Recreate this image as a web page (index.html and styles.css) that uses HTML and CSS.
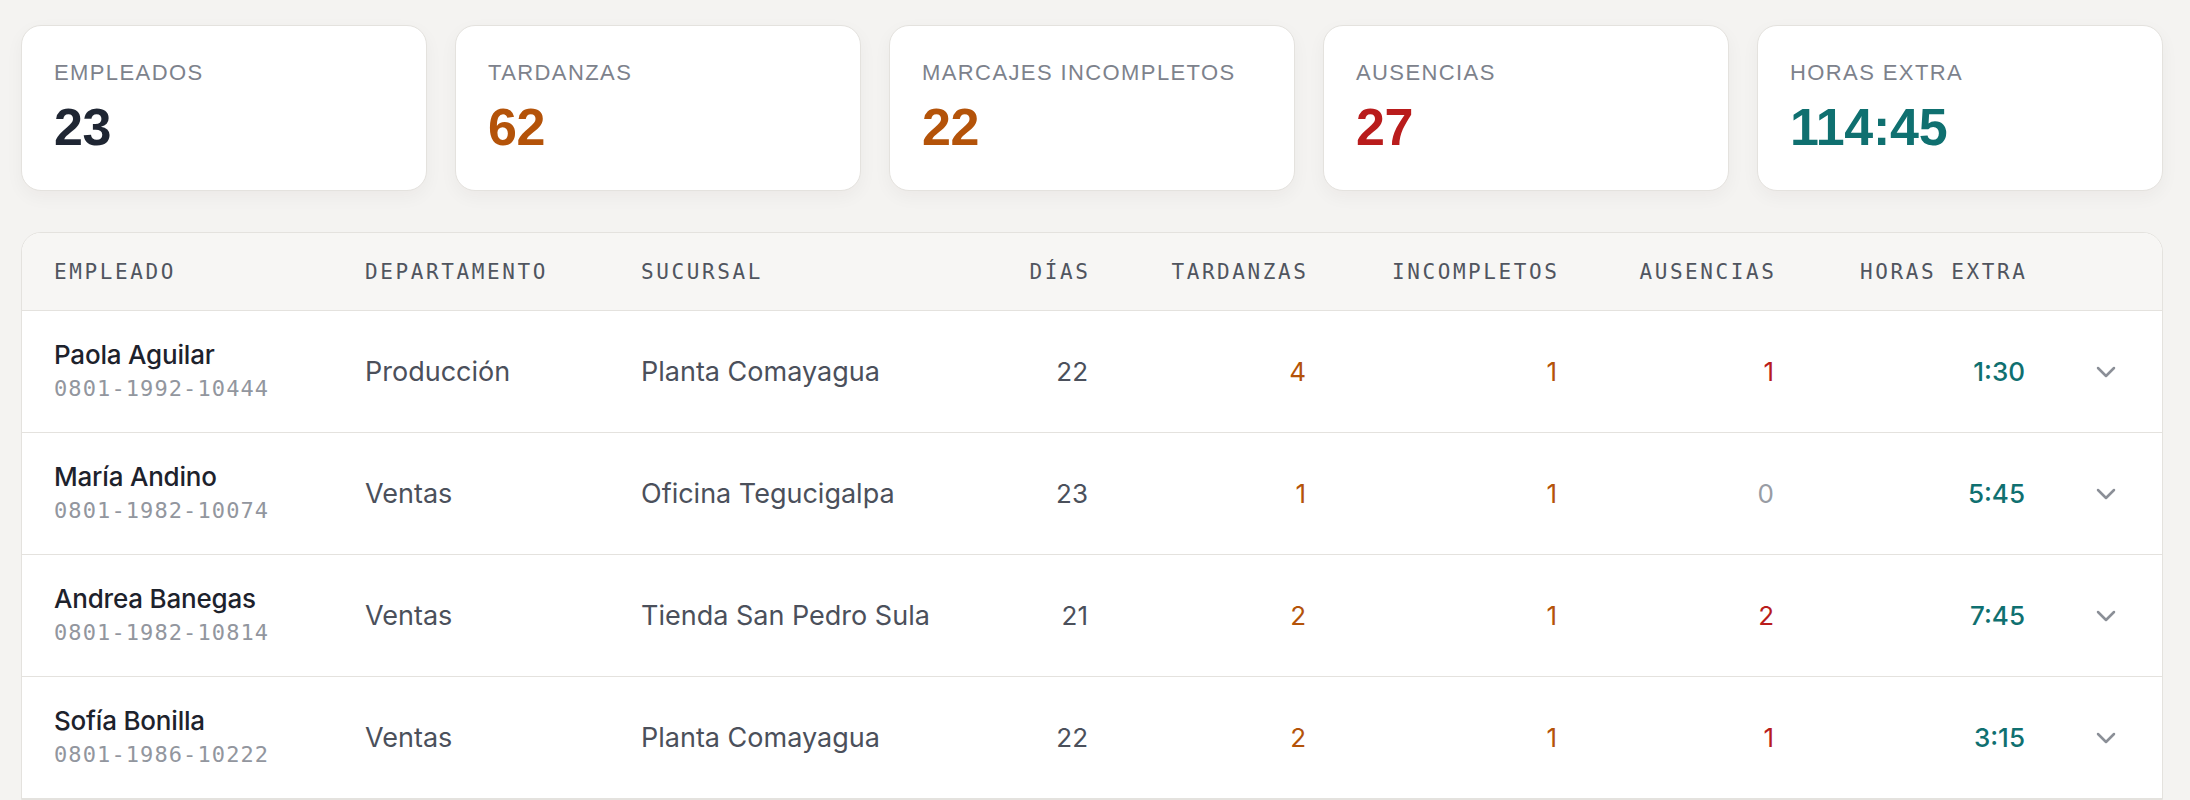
FILE: index.html
```html
<!DOCTYPE html>
<html lang="es">
<head>
<meta charset="utf-8">
<title>Resumen de asistencia</title>
<link rel="stylesheet" href="styles.css">
</head>
<body>
<main class="page">
  <section class="stats">
    <div class="card"><div class="card-label">EMPLEADOS</div><div class="card-value v-dark">23</div></div>
    <div class="card"><div class="card-label">TARDANZAS</div><div class="card-value v-orange">62</div></div>
    <div class="card"><div class="card-label">MARCAJES INCOMPLETOS</div><div class="card-value v-orange">22</div></div>
    <div class="card"><div class="card-label">AUSENCIAS</div><div class="card-value v-red">27</div></div>
    <div class="card"><div class="card-label">HORAS EXTRA</div><div class="card-value v-teal">114:45</div></div>
  </section>

  <section class="table">
    <div class="row head">
      <div class="c">EMPLEADO</div>
      <div class="c">DEPARTAMENTO</div>
      <div class="c">SUCURSAL</div>
      <div class="c r">DÍAS</div>
      <div class="c r">TARDANZAS</div>
      <div class="c r">INCOMPLETOS</div>
      <div class="c r">AUSENCIAS</div>
      <div class="c r">HORAS EXTRA</div>
      <div class="c"></div>
    </div>

    <div class="row body">
      <div class="c emp"><div class="name">Paola Aguilar</div><div class="id">0801-1992-10444</div></div>
      <div class="c txt">Producción</div>
      <div class="c txt">Planta Comayagua</div>
      <div class="c r num">22</div>
      <div class="c r num orange">4</div>
      <div class="c r num orange">1</div>
      <div class="c r num red">1</div>
      <div class="c r num teal">1:30</div>
      <div class="c chev"><svg width="20" height="12" viewBox="0 0 20 12"><polyline points="2,2 10,10 18,2" fill="none" stroke="#8b8f97" stroke-width="2.5" stroke-linecap="round" stroke-linejoin="round"/></svg></div>
    </div>

    <div class="row body">
      <div class="c emp"><div class="name">María Andino</div><div class="id">0801-1982-10074</div></div>
      <div class="c txt">Ventas</div>
      <div class="c txt">Oficina Tegucigalpa</div>
      <div class="c r num">23</div>
      <div class="c r num orange">1</div>
      <div class="c r num orange">1</div>
      <div class="c r num zero">0</div>
      <div class="c r num teal">5:45</div>
      <div class="c chev"><svg width="20" height="12" viewBox="0 0 20 12"><polyline points="2,2 10,10 18,2" fill="none" stroke="#8b8f97" stroke-width="2.5" stroke-linecap="round" stroke-linejoin="round"/></svg></div>
    </div>

    <div class="row body">
      <div class="c emp"><div class="name">Andrea Banegas</div><div class="id">0801-1982-10814</div></div>
      <div class="c txt">Ventas</div>
      <div class="c txt">Tienda San Pedro Sula</div>
      <div class="c r num">21</div>
      <div class="c r num orange">2</div>
      <div class="c r num orange">1</div>
      <div class="c r num red">2</div>
      <div class="c r num teal">7:45</div>
      <div class="c chev"><svg width="20" height="12" viewBox="0 0 20 12"><polyline points="2,2 10,10 18,2" fill="none" stroke="#8b8f97" stroke-width="2.5" stroke-linecap="round" stroke-linejoin="round"/></svg></div>
    </div>

    <div class="row body">
      <div class="c emp"><div class="name">Sofía Bonilla</div><div class="id">0801-1986-10222</div></div>
      <div class="c txt">Ventas</div>
      <div class="c txt">Planta Comayagua</div>
      <div class="c r num">22</div>
      <div class="c r num orange">2</div>
      <div class="c r num orange">1</div>
      <div class="c r num red">1</div>
      <div class="c r num teal">3:15</div>
      <div class="c chev"><svg width="20" height="12" viewBox="0 0 20 12"><polyline points="2,2 10,10 18,2" fill="none" stroke="#8b8f97" stroke-width="2.5" stroke-linecap="round" stroke-linejoin="round"/></svg></div>
    </div>
  </section>
</main>
</body>
</html>
```
FILE: styles.css
```css
* { box-sizing: border-box; }
html, body { margin: 0; padding: 0; }
body {
  background: #f4f3f1;
  font-family: "Inter", "Liberation Sans", sans-serif;
  color: #1f2430;
  overflow: hidden;
}
.page {
  padding: 25px 27px 0 21px;
}
.stats {
  display: grid;
  grid-template-columns: repeat(5, 1fr);
  gap: 28px;
}
.card {
  background: #ffffff;
  border: 1px solid #e4e2de;
  border-radius: 20px;
  height: 166px;
  padding: 36px 32px 0 32px;
  box-shadow: 0 6px 18px rgba(40, 30, 20, 0.045);
}
.card-label {
  font-family: "Liberation Sans", Arial, sans-serif;
  font-size: 22px;
  line-height: 22px;
  letter-spacing: 1.4px;
  color: #7d828c;
}
.card-value {
  font-family: "Liberation Sans", Arial, sans-serif;
  font-weight: 700;
  font-size: 52px;
  line-height: 50px;
  margin-top: 18px;
  letter-spacing: -0.3px;
}
.v-dark { color: #1f2633; }
.v-orange { color: #b45309; }
.v-red { color: #b91c1c; }
.v-teal { color: #0f7070; }

.table {
  margin-top: 41px;
  background: #ffffff;
  border: 1px solid #e4e2de;
  border-radius: 20px 20px 0 0;
  overflow: hidden;
}
.row {
  display: grid;
  grid-template-columns: 311px 276px 300px 147px 218px 251px 217px 251px 1fr;
  align-items: center;
  padding-left: 32px;
  border-bottom: 1px solid #e4e2de;
}
.head {
  height: 78px;
  background: #f7f6f4;
  font-family: "DejaVu Sans Mono", monospace;
  font-size: 21px;
  letter-spacing: 2.6px;
  color: #50555f;
}
.head .r { margin-right: -2.6px; }
.body { height: 122px; }
.r { text-align: right; }
.name {
  font-size: 26px;
  line-height: 30px;
  font-weight: 500;
  color: #1d222c;
  letter-spacing: -0.2px;
}
.id {
  margin-top: 5px;
  font-family: "DejaVu Sans Mono", monospace;
  font-size: 22px;
  line-height: 28px;
  letter-spacing: 1.1px;
  color: #92969e;
}
.txt {
  font-size: 27px;
  color: #4b505b;
}
.num {
  font-size: 26px;
  color: #4b505b;
}
.orange { color: #b45309; }
.red { color: #b91c1c; }
.teal { color: #0f7070; font-weight: 500; }
.zero { color: #989ca4; }
.chev {
  display: flex;
  align-items: center;
  padding-left: 71px;
}
.chev svg { display: block; }
```
